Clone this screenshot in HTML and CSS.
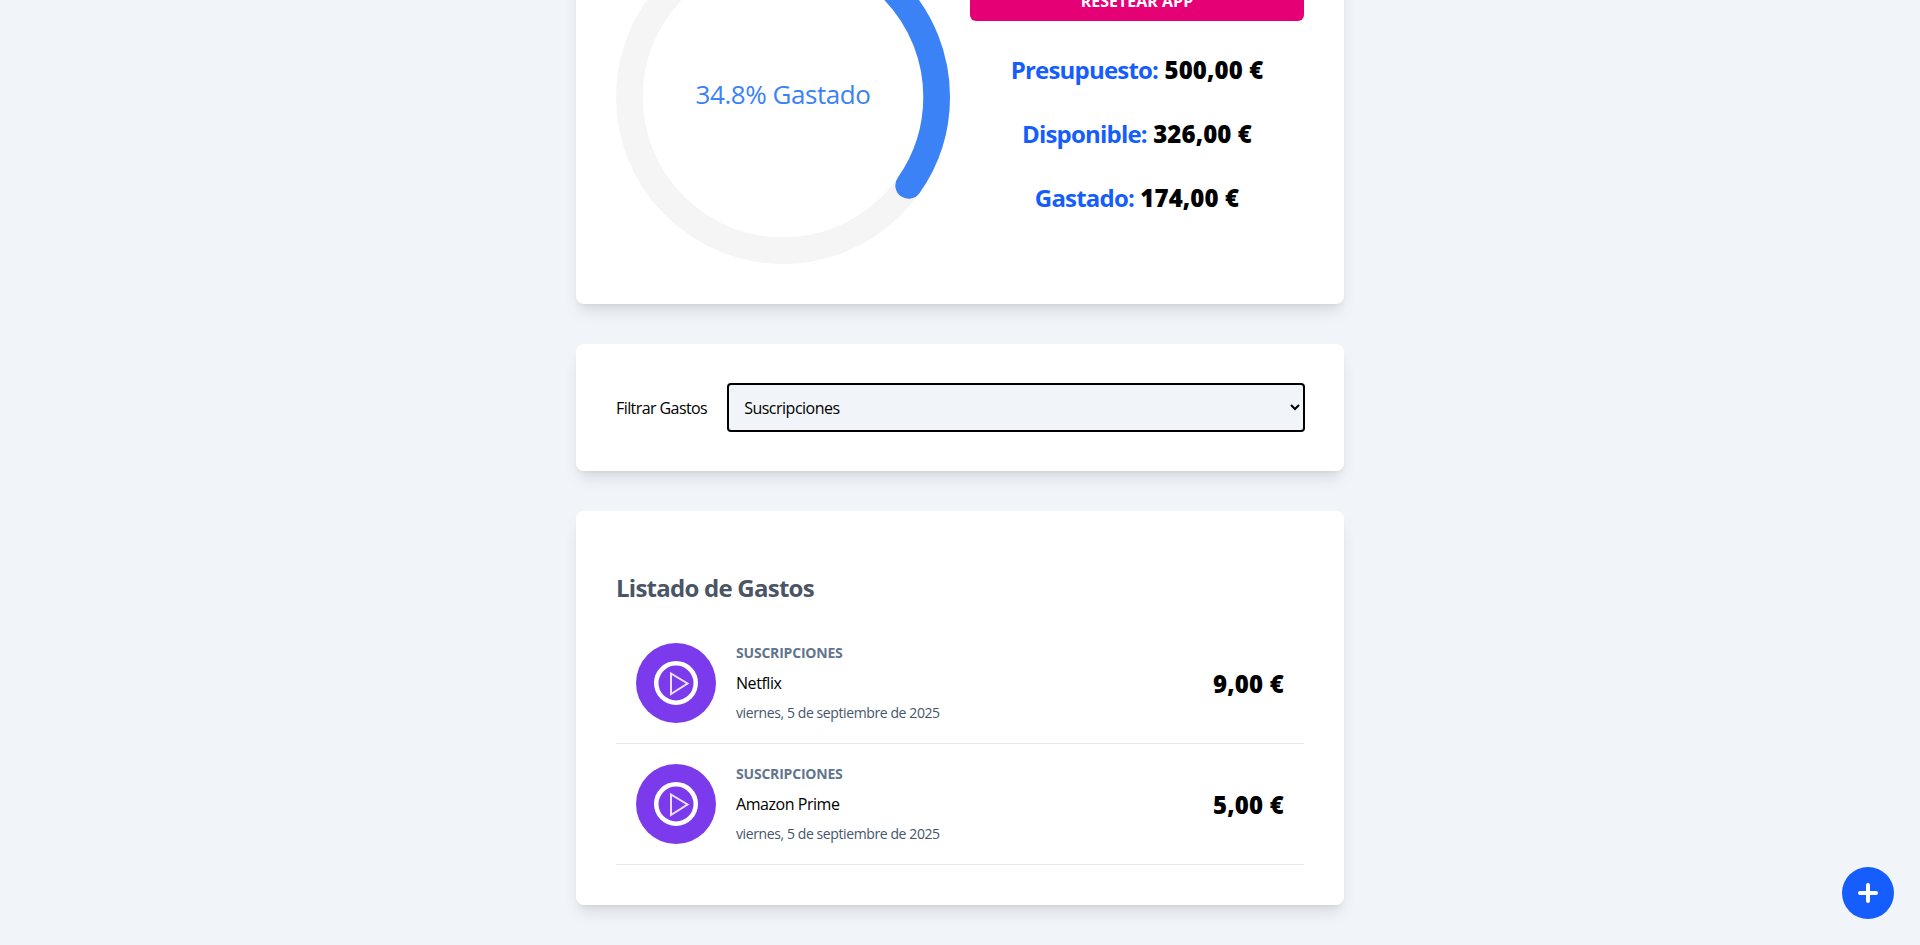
FILE: index.html
```html
<!DOCTYPE html>
<html lang="es">
<head>
<meta charset="utf-8">
<title>Planificador de Gastos</title>
<link rel="stylesheet" href="styles.css">
</head>
<body>
<main class="page">
  <section class="card budget">
    <div class="chart">
      <svg class="progress" viewBox="0 0 100 100">
        <circle class="progress-trail" cx="50" cy="50" r="46"></circle>
        <circle class="progress-path" cx="50" cy="50" r="46" pathLength="100" transform="rotate(-90 50 50)"></circle>
      </svg>
      <span class="progress-text">34.8% Gastado</span>
    </div>
    <div class="summary">
      <button class="reset" type="button">Resetear App</button>
      <p class="stat"><span class="stat-label">Presupuesto:</span> 500,00 €</p>
      <p class="stat"><span class="stat-label">Disponible:</span> 326,00 €</p>
      <p class="stat"><span class="stat-label">Gastado:</span> 174,00 €</p>
    </div>
  </section>

  <section class="card filter">
    <label class="filter-label" for="category">Filtrar Gastos</label>
    <select class="filter-select" id="category">
      <option>Suscripciones</option>
      <option>Ahorro</option>
      <option>Comida</option>
      <option>Casa</option>
      <option>Ocio</option>
      <option>Salud</option>
    </select>
  </section>

  <section class="card list">
    <h2 class="list-title">Listado de Gastos</h2>
    <article class="expense">
      <div class="expense-icon">
        <svg class="play" viewBox="0 0 44 44"><circle class="play-ring" cx="22" cy="22" r="19.75"></circle><path class="play-arrow" d="M17 12.5 33.5 22.5 17 33Z"></path></svg>
      </div>
      <div class="expense-info">
        <p class="expense-category">Suscripciones</p>
        <p class="expense-name">Netflix</p>
        <p class="expense-date">viernes, 5 de septiembre de 2025</p>
      </div>
      <p class="expense-amount">9,00 €</p>
    </article>
    <article class="expense">
      <div class="expense-icon">
        <svg class="play" viewBox="0 0 44 44"><circle class="play-ring" cx="22" cy="22" r="19.75"></circle><path class="play-arrow" d="M17 12.5 33.5 22.5 17 33Z"></path></svg>
      </div>
      <div class="expense-info">
        <p class="expense-category">Suscripciones</p>
        <p class="expense-name">Amazon Prime</p>
        <p class="expense-date">viernes, 5 de septiembre de 2025</p>
      </div>
      <p class="expense-amount">5,00 €</p>
    </article>
  </section>
</main>
<button class="fab" type="button" aria-label="Añadir gasto">
  <svg viewBox="0 0 20 20"><path d="M2 10H18M10 2V18"></path></svg>
</button>
</body>
</html>
```
FILE: styles.css
```css
* { box-sizing: border-box; }
html, body { margin: 0; padding: 0; }
body {
  background: #f1f5f9;
  color: #000;
  font-family: "Open Sans", "Noto Sans", sans-serif;
  font-size: 16px;
  line-height: 24px;
}
p, h2 { margin: 0; }
.page {
  width: 768px;
  margin: -110px auto 0;
  padding-bottom: 40px;
  display: flex;
  flex-direction: column;
  gap: 40px;
}
.card {
  background: #fff;
  border-radius: 8px;
  padding: 40px;
  box-shadow: 0 10px 15px -3px rgba(0,0,0,.1), 0 4px 6px -4px rgba(0,0,0,.1);
}
.budget {
  display: grid;
  grid-template-columns: 1fr 1fr;
  gap: 20px;
  align-items: center;
}
.chart { position: relative; width: 334px; height: 334px; }
.progress { display: block; width: 100%; height: 100%; }
.progress-trail, .progress-path { fill: none; stroke-width: 8; }
.progress-trail { stroke: #f5f5f5; }
.progress-path {
  stroke: #3b82f6;
  stroke-linecap: round;
  stroke-dasharray: 34.8 100;
}
.progress-text {
  position: absolute;
  inset: 0 0 7px;
  display: flex;
  align-items: center;
  justify-content: center;
  color: #3b82f6;
  font-size: 26px;
  font-weight: 400;
  letter-spacing: -0.45px;
}
.summary { display: flex; flex-direction: column; gap: 32px; }
.reset {
  height: 41px;
  margin-bottom: 1px;
  border: 0;
  border-radius: 6px;
  background: #e60076;
  color: #fff;
  font: 700 16px/24px "Open Sans", sans-serif;
  text-transform: uppercase;
}
.stat {
  text-align: center;
  font-size: 24px;
  line-height: 32px;
  font-weight: 800;
  letter-spacing: 0.1px;
}
.stat-label { color: #155dfc; font-weight: 700; letter-spacing: -0.8px; }
.filter { display: flex; align-items: center; gap: 20px; padding: 39px 39px 39px 40px; }
.filter-label { font-size: 16px; letter-spacing: -0.58px; white-space: nowrap; }
.filter-select {
  flex: 1;
  height: 49px;
  padding: 0 11px;
  background: #f1f5f9;
  border: 2px solid #000;
  border-radius: 4px;
  color: #000;
  font: 400 16px/24px "Open Sans", sans-serif;
  letter-spacing: -0.5px;
}
.list-title {
  color: #4a5565;
  font-size: 24px;
  line-height: 32px;
  font-weight: 700;
  letter-spacing: -0.75px;
  padding-top: 21px;
  margin-bottom: 19px;
}
.expense {
  display: flex;
  align-items: center;
  gap: 20px;
  padding: 20px;
  border-bottom: 1px solid #e5e7eb;
}
.expense-icon {
  flex: none;
  width: 80px;
  height: 80px;
  border-radius: 50%;
  background: #7c3aed;
  display: flex;
  align-items: center;
  justify-content: center;
}
.play { width: 44px; height: 44px; display: block; }
.play-ring { fill: none; stroke: #fff; stroke-width: 4.5; }
.play-arrow { fill: none; stroke: #fff; stroke-width: 2; stroke-opacity: .85; }
.expense-info { flex: 1; display: flex; flex-direction: column; gap: 8px; }
.expense-category {
  color: #62748e;
  font-size: 14px;
  line-height: 20px;
  font-weight: 700;
  letter-spacing: -0.2px;
  text-transform: uppercase;
}
.expense-name { font-size: 16px; line-height: 24px; letter-spacing: -0.45px; }
.expense-date { color: #45556c; font-size: 14px; line-height: 20px; letter-spacing: -0.4px; }
.expense-amount { margin-top: 2px; font-size: 24px; line-height: 32px; font-weight: 800; letter-spacing: 0.2px; }
.fab {
  position: fixed;
  right: 26px;
  bottom: 26px;
  width: 52px;
  height: 52px;
  padding: 0;
  border: 0;
  border-radius: 50%;
  background: #155dfc;
  display: flex;
  align-items: center;
  justify-content: center;
}
.fab svg { width: 20px; height: 20px; display: block; }
.fab path { fill: none; stroke: #fff; stroke-width: 4; stroke-linecap: round; }
```
